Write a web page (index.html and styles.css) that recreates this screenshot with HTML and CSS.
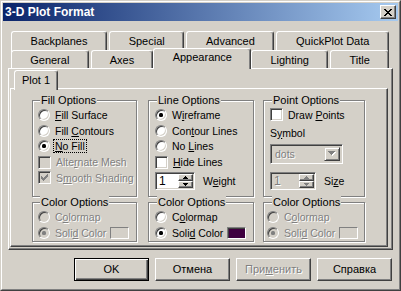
FILE: index.html
```html
<!DOCTYPE html>
<html lang="en">
<head>
    <meta charset="UTF-8">
    <title>3-D Plot Format</title>
    <link rel="stylesheet" href="styles.css">
</head>
<body>
    <div class="window">
        <div class="frame">
            <div class="titlebar">
                <span class="title">3-D Plot Format</span>
                <span class="close-btn">
                    <svg width="8" height="7" viewBox="0 0 8 7"><path d="M0 0h2v1H0z M6 0h2v1H6z M1 1h2v1H1z M5 1h2v1H5z M2 2h4v1H2z M3 3h2v1H3z M2 4h4v1H2z M1 5h2v1H1z M5 5h2v1H5z M0 6h2v1H0z M6 6h2v1H6z" fill="#000"/></svg>
                </span>
            </div>

            <div class="content">
                <!-- outer tab strip, two rows -->
                <div class="tab-row back">
                    <div class="tab">Backplanes</div>
                    <div class="tab">Special</div>
                    <div class="tab">Advanced</div>
                    <div class="tab">QuickPlot Data</div>
                </div>
                <div class="tab-row front">
                    <div class="tab">General</div>
                    <div class="tab">Axes</div>
                    <div class="tab selected">Appearance</div>
                    <div class="tab">Lighting</div>
                    <div class="tab">Title</div>
                </div>

                <div class="panel">
                    <div class="inner-tabs">
                        <div class="tab selected">Plot 1</div>
                    </div>
                    <div class="inner-panel">

                        <div class="column col-fill">
                            <div class="group group-top">
                                <div class="group-title">Fill Options</div>
                                <div class="row"><span class="radio"></span><span><u>F</u>ill Surface</span></div>
                                <div class="row"><span class="radio"></span><span>Fill <u>C</u>ontours</span></div>
                                <div class="row"><span class="radio"><span class="dot"></span></span><span class="focus"><u>N</u>o Fill</span></div>
                                <div class="row disabled"><span class="check"></span><span>Alte<u>r</u>nate Mesh</span></div>
                                <div class="row disabled"><span class="check">
                                    <svg width="7" height="7" viewBox="0 0 7 7"><path d="M6 0h1v1H6z M5 1h2v1H5z M0 2h1v1H0z M4 2h3v1H4z M0 3h2v1H0z M3 3h3v1H3z M0 4h5v1H0z M1 5h3v1H1z M2 6h1v1H2z" fill="#808080"/></svg>
                                </span><span>S<u>m</u>ooth Shading</span></div>
                            </div>
                            <div class="group group-color">
                                <div class="group-title">Color Options</div>
                                <div class="row disabled"><span class="radio"></span><span>C<u>o</u>lormap</span></div>
                                <div class="row disabled"><span class="radio"><span class="dot"></span></span><span>Soli<u>d</u> Color</span><span class="swatch"></span></div>
                            </div>
                        </div>

                        <div class="column col-line">
                            <div class="group group-top">
                                <div class="group-title">Line Options</div>
                                <div class="row"><span class="radio"><span class="dot"></span></span><span>W<u>i</u>reframe</span></div>
                                <div class="row"><span class="radio"></span><span>Con<u>t</u>our Lines</span></div>
                                <div class="row"><span class="radio"></span><span>No <u>L</u>ines</span></div>
                                <div class="row"><span class="check"></span><span><u>H</u>ide Lines</span></div>
                                <div class="row spin-row">
                                    <span class="spinner">
                                        <span class="spin-value">1</span>
                                        <span class="spin-btns">
                                            <span class="spin-btn"><svg width="5" height="3" viewBox="0 0 5 3"><path d="M2 0h1v1h1v1h1v1H0V2h1V1h1z" fill="#000"/></svg></span>
                                            <span class="spin-btn"><svg width="5" height="3" viewBox="0 0 5 3"><path d="M0 0h5v1H4v1H3v1H2V2H1V1H0z" fill="#000"/></svg></span>
                                        </span>
                                    </span>
                                    <span class="spin-label">W<u>e</u>ight</span>
                                </div>
                            </div>
                            <div class="group group-color">
                                <div class="group-title">Color Options</div>
                                <div class="row"><span class="radio"></span><span>C<u>o</u>lormap</span></div>
                                <div class="row"><span class="radio"><span class="dot"></span></span><span>Soli<u>d</u> Color</span><span class="swatch filled"></span></div>
                            </div>
                        </div>

                        <div class="column col-point">
                            <div class="group group-top">
                                <div class="group-title">Point Options</div>
                                <div class="row"><span class="check"></span><span>Draw <u>P</u>oints</span></div>
                                <div class="symbol-label">S<u>y</u>mbol</div>
                                <div class="combo disabled">
                                    <span class="combo-value">dots</span>
                                    <span class="combo-btn"><svg width="8" height="5" viewBox="0 0 8 5"><path d="M1 1h7v1H7v1H6v1H5v1H4V4H3V3H2V2H1z" fill="#fff"/><path d="M0 0h7v1H6v1H5v1H4v1H3V3H2V2H1V1H0z" fill="#808080"/></svg></span>
                                </div>
                                <div class="row spin-row disabled">
                                    <span class="spinner small">
                                        <span class="spin-value">1</span>
                                        <span class="spin-btns">
                                            <span class="spin-btn"><svg width="5" height="3" viewBox="0 0 5 3"><path d="M2 0h1v1h1v1h1v1H0V2h1V1h1z" fill="#808080"/></svg></span>
                                            <span class="spin-btn"><svg width="5" height="3" viewBox="0 0 5 3"><path d="M0 0h5v1H4v1H3v1H2V2H1V1H0z" fill="#808080"/></svg></span>
                                        </span>
                                    </span>
                                    <span class="spin-label enabled">Si<u>z</u>e</span>
                                </div>
                            </div>
                            <div class="group group-color">
                                <div class="group-title">Color Options</div>
                                <div class="row disabled"><span class="radio"></span><span>C<u>o</u>lormap</span></div>
                                <div class="row disabled"><span class="radio"><span class="dot"></span></span><span>Soli<u>d</u> Color</span><span class="swatch"></span></div>
                            </div>
                        </div>

                    </div>
                </div>

                <div class="buttons">
                    <div class="btn btn-default">OK</div>
                    <div class="btn">Отмена</div>
                    <div class="btn disabled">При<u>м</u>енить</div>
                    <div class="btn">Справка</div>
                </div>
            </div>
        </div>
    </div>
</body>
</html>
```

FILE: styles.css
```css
/* Classic dialog look */
* {
    box-sizing: border-box;
}

body {
    margin: 0;
    font-family: "Liberation Sans", Arial, sans-serif;
    font-size: 11px;
    color: #000;
    background-color: #d4d0c8;
}

u {
    text-underline-offset: 1px;
}

.window {
    width: 401px;
    height: 291px;
    border: 1px solid;
    border-color: #d4d0c8 #404040 #404040 #d4d0c8;
    background-color: #d4d0c8;
}

.frame {
    height: 100%;
    border: 1px solid;
    border-color: #fff #808080 #808080 #fff;
    padding: 1px;
    display: flex;
    flex-direction: column;
}

.titlebar {
    height: 18px;
    display: flex;
    align-items: center;
    padding: 0 2px;
    background: linear-gradient(to right, #0a246a, #a6caf0);
    color: #fff;
}

.title {
    flex: 1;
    font-weight: bold;
    font-size: 12px;
}

.close-btn {
    width: 16px;
    height: 14px;
    display: flex;
    align-items: center;
    justify-content: center;
    background-color: #d4d0c8;
    border: 1px solid;
    border-color: #fff #404040 #404040 #fff;
    box-shadow: inset -1px -1px #808080;
}

.content {
    flex: 1;
    display: flex;
    flex-direction: column;
    padding: 0 5px;
}

/* tabs */
.tab-row {
    display: flex;
    gap: 2px;
    padding: 0 4px 0 3px;
}

.tab-row.back {
    margin-top: 10px;
    height: 19px;
}

.tab-row.front {
    height: 18px;
}

.tab {
    flex: 1 1 auto;
    height: 100%;
    text-align: center;
    line-height: 18px;
    background-color: #d4d0c8;
    border: 1px solid;
    border-bottom: none;
    border-color: #fff #404040 #404040 #fff;
    border-radius: 3px 3px 0 0;
    box-shadow: inset -1px 0 #808080;
}

.back .tab {
    height: 21px;
}

.tab.selected {
    position: relative;
    z-index: 1;
    margin: -2px -2px -1px;
    height: 21px;
    line-height: 17px;
}

.panel {
    height: 182px;
    border: 1px solid;
    border-color: #fff #404040 #404040 #fff;
    box-shadow: inset -1px -1px #808080;
    padding: 0 4px 2px 1px;
    display: flex;
    flex-direction: column;
}

.inner-tabs {
    display: flex;
    height: 19px;
    padding: 1px 0 0 4px;
}

.inner-tabs .tab.selected {
    flex: none;
    width: 44px;
    margin: 0 0 -1px;
    height: 20px;
    line-height: 18px;
}

.inner-panel {
    flex: 1;
    display: flex;
    border: 1px solid;
    border-color: #fff #404040 #404040 #fff;
    box-shadow: inset -1px -1px #808080;
    padding: 11px 0 0 21px;
    font-size: 10.5px;
}

.column {
    display: flex;
    flex-direction: column;
    gap: 5px;
}

.col-fill {
    width: 105px;
}

.col-line {
    width: 106px;
    margin-left: 11px;
}

.col-point {
    width: 102px;
    margin-left: 9px;
}

/* group boxes */
.group {
    display: flex;
    flex-direction: column;
    border: 1px solid #808080;
    box-shadow: inset 1px 1px #fff, 1px 1px #fff;
    padding-left: 5px;
}

.group-top {
    height: 97px;
}

.group-color {
    height: 40px;
}

.col-line .group,
.col-point .group-top {
    padding-left: 6px;
}

.col-point .group-color {
    padding-left: 3px;
}

.group-title {
    align-self: flex-start;
    margin: -7px 0 0 2px;
    padding: 0 1px;
    line-height: 13px;
    font-size: 11px;
    background-color: #d4d0c8;
}

.col-point .group-color .group-title {
    margin-left: 5px;
}

.row {
    height: 15.75px;
    display: flex;
    align-items: center;
    gap: 5px;
    white-space: nowrap;
}

.disabled {
    color: #808080;
    text-shadow: 1px 1px 0 #fff;
}

.disabled .enabled {
    color: #000;
    text-shadow: none;
}

/* radio and checkbox */
.radio {
    flex: none;
    width: 12px;
    height: 12px;
    border-radius: 50%;
    border: 1px solid;
    border-color: #808080 #fff #fff #808080;
    box-shadow: inset 1px 1px #404040, inset -1px -1px #d4d0c8;
    background-color: #fff;
    display: flex;
    align-items: center;
    justify-content: center;
}

.dot {
    width: 4px;
    height: 4px;
    border-radius: 1.5px;
    background-color: #000;
}

.disabled .radio {
    background-color: #d4d0c8;
}

.disabled .dot {
    background-color: #808080;
}

.check {
    flex: none;
    width: 13px;
    height: 13px;
    border: 1px solid;
    border-color: #808080 #fff #fff #808080;
    box-shadow: inset 1px 1px #404040, inset -1px -1px #d4d0c8;
    background-color: #fff;
    display: flex;
    align-items: center;
    justify-content: center;
}

.disabled .check {
    background-color: #d4d0c8;
}

.focus {
    outline: 1px dotted #000;
    outline-offset: 0;
    padding: 0 1px;
    margin-left: -1px;
}

.swatch {
    flex: none;
    width: 19px;
    height: 12px;
    margin-left: -1px;
    border: 1px solid;
    border-color: #808080 #fff #fff #808080;
}

.swatch.filled {
    background-color: #3f0040;
    box-shadow: inset 1px 1px #404040;
}

/* spinner */
.spin-row {
    height: 18px;
    margin-top: 2px;
    gap: 8px;
}

.spinner {
    width: 40px;
    height: 18px;
    display: flex;
    border: 1px solid;
    border-color: #808080 #fff #fff #808080;
    box-shadow: inset 1px 1px #404040, inset -1px -1px #d4d0c8;
    background-color: #fff;
    padding: 2px 2px 2px 3px;
}

.spinner.small {
    width: 46px;
}

.disabled .spinner {
    background-color: #d4d0c8;
}

.spin-value {
    flex: 1;
    line-height: 12px;
    font-size: 12px;
}

.spin-btns {
    display: flex;
    flex-direction: column;
    width: 15px;
    margin: -1px -1px -1px 0;
}

.spin-btn {
    flex: 1;
    display: flex;
    align-items: center;
    justify-content: center;
    background-color: #d4d0c8;
    border: 1px solid;
    border-color: #fff #404040 #404040 #fff;
    box-shadow: inset -1px -1px #808080;
}

.spin-btn svg {
    display: block;
}

/* combo */
.symbol-label {
    margin-top: 2px;
    height: 16px;
    line-height: 16px;
}

.combo {
    margin-top: 3px;
    width: 73px;
    height: 20px;
    display: flex;
    border: 1px solid;
    border-color: #808080 #fff #fff #808080;
    box-shadow: inset 1px 1px #404040, inset -1px -1px #d4d0c8;
    padding: 2px;
}

.combo-value {
    flex: 1;
    line-height: 15px;
    padding-left: 2px;
}

.combo-btn {
    width: 16px;
    display: flex;
    align-items: center;
    justify-content: center;
    border: 1px solid;
    border-color: #d4d0c8 #404040 #404040 #d4d0c8;
    box-shadow: inset 1px 1px #fff, inset -1px -1px #808080;
}

.col-point .spin-row {
    margin-top: 8px;
}

/* dialog buttons */
.buttons {
    display: flex;
    justify-content: flex-end;
    gap: 6px;
    margin-top: 8px;
    padding-right: 1px;
}

.btn {
    width: 75px;
    height: 23px;
    line-height: 21px;
    text-align: center;
    border: 1px solid;
    border-color: #fff #404040 #404040 #fff;
    box-shadow: inset -1px -1px #808080;
}

.btn-default {
    border-color: #000;
    box-shadow: inset 1px 1px #fff, inset -1px -1px #404040, inset -2px -2px #808080;
}
```
